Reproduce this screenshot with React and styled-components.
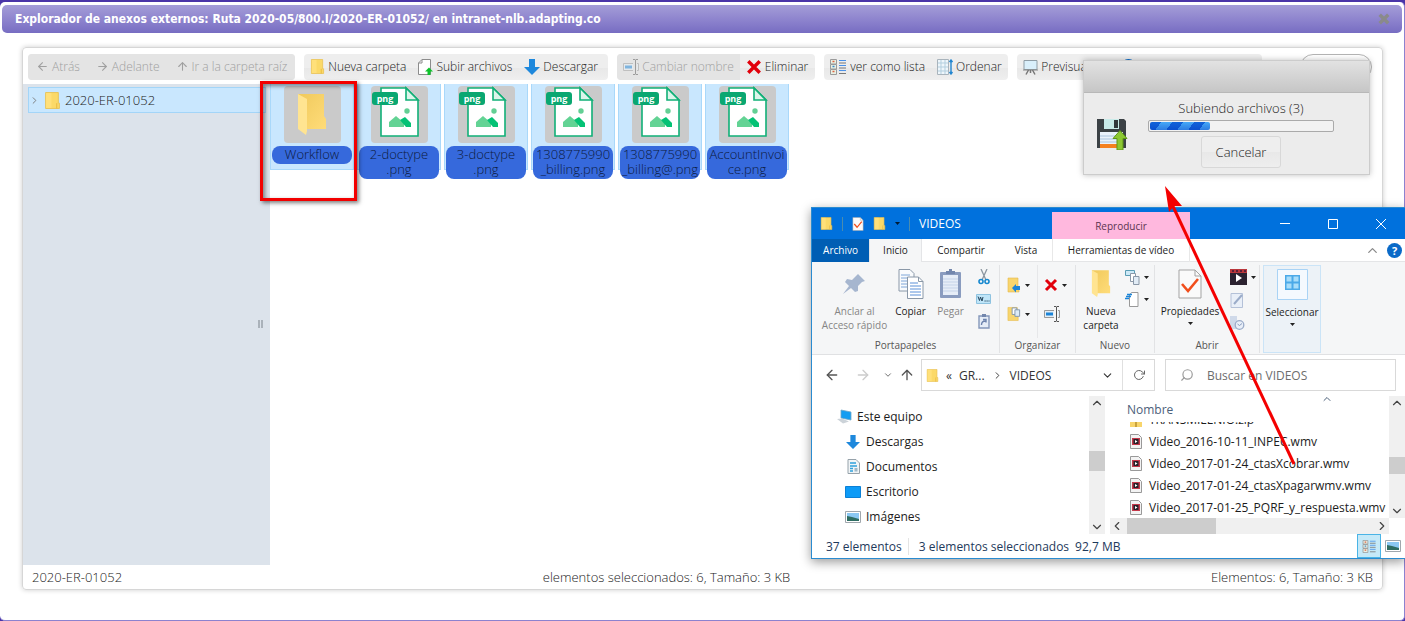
import React from "react";
import styled, { createGlobalStyle, css } from "styled-components";
import {
  FiArrowLeft,
  FiArrowRight,
  FiArrowUp,
  FiChevronDown,
  FiChevronRight,
  FiChevronUp,
  FiChevronLeft,
  FiRotateCw,
  FiSearch,
} from "react-icons/fi";

const GlobalStyle = createGlobalStyle`
  * {
    box-sizing: border-box;
  }

  body {
    margin: 0;
    background: #fff;
    font-family: "Open Sans", "Liberation Sans", sans-serif;
    overflow: hidden;
  }

  button, input {
    font: inherit;
    color: inherit;
    border: 0;
    padding: 0;
    background: none;
  }

  ul {
    list-style: none;
    margin: 0;
    padding: 0;
  }

  svg {
    display: block;
    flex: none;
  }
`;

/* ---------- Page and dialog ---------- */

const Page = styled.div`
  position: relative;
  display: flex;
  flex-direction: column;
  min-height: 100vh;
  background: #4a35a8;
  padding-top: 2px;
`;

const Dialog = styled.section`
  flex: 1;
  display: flex;
  flex-direction: column;
  background: #fff;
  border: 1px solid #8c82cf;
  border-width: 0 1px 1px 0;
  border-radius: 5px;
  padding: 3px 1px 0 2px;
`;

const DialogHeader = styled.header`
  display: flex;
  align-items: center;
  justify-content: space-between;
  height: 28px;
  padding: 0 12px 0 13px;
  margin-right: 1px;
  border-radius: 5px;
  background: linear-gradient(#a49dd8, #8a80cc 60%, #776dc2);
`;

const DialogTitle = styled.h1`
  margin: 0;
  color: #fff;
  font: bold 12px "DejaVu Sans Condensed", "DejaVu Sans", sans-serif;
`;

const CloseButton = styled.button`
  display: flex;
`;

const Manager = styled.main`
  flex: 1;
  display: flex;
  flex-direction: column;
  margin: 14px 20px 30px;
  border: 1px solid #d6d6d6;
  border-radius: 4px;
  box-shadow: 0 0 5px rgba(0, 0, 0, 0.2);
  font-size: 13px;
  font-weight: 300;
  color: #222;
`;

/* ---------- Toolbar ---------- */

const Toolbar = styled.nav`
  display: flex;
  height: 36px;
  gap: 9px;
  padding: 6px 10px 4px 5px;
  font-size: 12px;
`;

const ToolGroup = styled.div`
  display: flex;
  height: 26px;
  overflow: hidden;
  border-radius: 4px;
  background: linear-gradient(#eee 55%, #e8e8e8 55%, #efefef);
  min-width: ${(p) => p.$min}px;
`;

const ToolButton = styled.button`
  display: flex;
  align-items: center;
  gap: 3px;
  padding: 0 ${(p) => (p.$wide ? 8 : 6)}px 1px;
  white-space: nowrap;

  &:disabled {
    color: #a0a0a0;
    background: #e4e4e4;
  }
`;

const SearchBox = styled.input`
  width: 72px;
  height: 26px;
  margin-left: auto;
  border: 1px solid #b4b4b4;
  border-radius: 13px;
`;

/* ---------- Folder tree and files ---------- */

const Workspace = styled.div`
  flex: 1;
  display: flex;
`;

const Tree = styled.aside`
  position: relative;
  width: 247px;
  padding: 3px 4px 0 5px;
  background: #dce3eb;
`;

const TreeItem = styled.button`
  display: flex;
  align-items: center;
  width: 100%;
  height: 26px;
  border: 1px solid #a3d5f8;
  background: #c9e7fe;
  gap: 4px;
`;

const Grip = styled.div`
  position: absolute;
  right: 7px;
  top: 49%;
  width: 5px;
  height: 8px;
  border: 1px solid #aab2ba;
  border-width: 0 2px;
`;

const Files = styled.ul`
  flex: 1;
  display: flex;
  gap: 3px;
`;

const File = styled.li`
  display: flex;
  flex-direction: column;
  align-items: center;
  gap: 3px;
  width: 84px;
  height: 86px;
  padding-top: 2px;
  border: 1px solid #a9d8fa;
  border-top-width: 0;
  background: #c9e7fe;
`;

const Thumb = styled.div`
  width: 57px;
  height: 57px;
  display: flex;
  align-items: center;
  justify-content: center;
  border-radius: 4px;
  background: #cacaca;
`;

const FileName = styled.span`
  width: 80px;
  padding: 1px 0 2px;
  border-radius: 8px;
  background: #3669dc;
  color: #0c1a3c;
  line-height: 15px;
  text-align: center;
  white-space: pre;
`;

const StatusBar = styled.footer`
  display: flex;
  align-items: center;
  justify-content: space-between;
  height: 24px;
  padding: 0 9px;
`;

const Highlight = styled.div`
  position: absolute;
  left: 260px;
  top: 81px;
  width: 97px;
  height: 120px;
  border: 3px solid #f20000;
  box-shadow: 2px 2px 4px rgba(0, 0, 0, 0.5), inset 2px 2px 4px rgba(0, 0, 0, 0.45);
`;

/* ---------- Upload notice ---------- */

const Upload = styled.section`
  position: absolute;
  right: 35px;
  top: 60px;
  width: 287px;
  border: 1px solid #ccc;
  background: #ececec;
  box-shadow: 0 0 6px rgba(0, 0, 0, 0.25);
  font-size: 13px;
  font-weight: 300;
  color: #222;
`;

const UploadHeader = styled.div`
  height: 32px;
  border-bottom: 1px solid #b8b8b8;
  background: linear-gradient(#e2e2e2, #c6c6c6);
`;

const UploadBody = styled.div`
  display: flex;
  gap: 20px;
  padding: 6px 35px 6px 12px;
  align-items: center;
`;

const UploadInfo = styled.div`
  flex: 1;
  display: flex;
  flex-direction: column;
  align-items: center;
`;

const UploadText = styled.span`
  line-height: 18px;
`;

const Progress = styled.div`
  width: 100%;
  height: 12px;
  margin: 3px 0 4px;
  border: 1px solid #aaa;
  border-radius: 2px;
  padding: 1px;
  background: #f2f2f2;
`;

const ProgressBar = styled.div`
  height: 8px;
  border-radius: 2px;
  background: linear-gradient(rgba(0, 60, 190, 0), rgba(0, 40, 180, 0.35)),
    repeating-linear-gradient(125deg, #1063da 0 9px, #45a8f8 9px 18px);
`;

const CancelButton = styled.button`
  height: 32px;
  padding: 0 14px;
  border: 1px solid #d8d8d8;
  border-radius: 3px;
  background: linear-gradient(#eee 50%, #e8e8e8 50%, #eee);
`;

/* ---------- Windows explorer ---------- */

const Explorer = styled.section`
  position: absolute;
  right: 0;
  top: 207px;
  width: 594px;
  border: 1px solid #2a8bd0;
  border-right: 0;
  background: #fff;
  box-shadow: 0 3px 10px rgba(0, 0, 0, 0.4);
  font-size: 12px;
  color: #1c1c1c;
`;

const TitleBar = styled.header`
  display: flex;
  height: 31px;
  background: #0071dd;
  color: #fff;
`;

const QuickAccess = styled.div`
  display: flex;
  align-items: center;
  gap: 9px;
  width: 240px;
  padding-left: 8px;
`;

const Bar = styled.i`
  width: 1px;
  height: 14px;
  background: #4a8cae;
`;

const ToolsTab = styled.div`
  width: 138px;
  margin-top: 4px;
  background: #ffb8de;
  color: #5b3550;
  font-size: 10px;
  line-height: 28px;
  text-align: center;
`;

const WindowButtons = styled.div`
  display: flex;
  margin-left: auto;
`;

const WindowButton = styled.button`
  display: flex;
  width: 48px;
  align-items: center;
  justify-content: center;
`;

const Tabs = styled.nav`
  display: flex;
  align-items: center;
  height: 23px;
  font-size: 10px;
  border-bottom: 1px solid #e4e5e7;
`;

const Tab = styled.button`
  width: ${(p) => p.$width}px;
  height: 23px;
  white-space: nowrap;
  ${(p) => p.$file && css`background: #005eb4; color: #fff;`}
  ${(p) => p.$active && css`background: #f5f6f7; border: 1px solid #e4e5e7; border-width: 0 1px;`}
  ${(p) => p.$tool && css`border: 1px solid #e8e8e8; border-width: 0 1px;`}
`;

const TabsEnd = styled.div`
  display: flex;
  align-items: center;
  gap: 7px;
  margin-left: auto;
  padding-right: 3px;
  color: #888;
`;

const Ribbon = styled.div`
  display: flex;
  height: 93px;
  padding-top: 3px;
  background: #f5f6f7;
  border-bottom: 1px solid #e0e1e3;
  font-size: 10px;
`;

const RibbonGroup = styled.div`
  display: flex;
  flex-direction: column;
  width: ${(p) => p.$width}px;
  height: 88px;
  border-right: 1px solid #e2e3e5;
`;

const RibbonItems = styled.div`
  flex: 1;
  display: flex;
  justify-content: center;
`;

const RibbonLabel = styled.span`
  line-height: 14px;
  height: 15px;
  text-align: center;
  color: #555;
`;

const BigButton = styled.button`
  display: flex;
  flex-direction: column;
  align-items: center;
  width: ${(p) => p.$width}px;
  padding-top: 4px;
  line-height: 14px;
  white-space: pre;

  svg {
    margin-bottom: 5px;
  }

  span + svg {
    margin: 4px 0 0;
  }

  &:disabled {
    color: #858585;
  }
`;

const SmallColumn = styled.div`
  display: flex;
  flex-direction: column;
  align-items: ${(p) => (p.$left ? "flex-start" : "center")};
  gap: ${(p) => p.$gap || 6}px;
  width: ${(p) => p.$width}px;
  padding-top: ${(p) => p.$top || 4}px;
  padding-left: ${(p) => (p.$left ? 6 : 0)}px;
  border-left: ${(p) => (p.$line ? "1px solid #e6e7e9" : "0")};
`;

const SmallButton = styled.button`
  display: flex;
  align-items: center;
  gap: 4px;
  height: 16px;
`;

const SelectButton = styled(BigButton)`
  margin-left: 3px;
  height: 88px;
  border: 1px solid #cbe4f7;
  background: #ecf2f7;
  padding-top: 3px;
`;

const AddressRow = styled.div`
  display: flex;
  align-items: center;
  height: 32px;
  margin: 4px 9px 5px 10px;
  color: #555;
`;

const NavButton = styled.button`
  display: flex;
  justify-content: center;
  width: ${(p) => p.$width}px;

  &:disabled {
    color: #ccc;
  }
`;

const AddressBox = styled.div`
  display: flex;
  align-items: center;
  width: 234px;
  height: 32px;
  padding-left: 4px;
  border: 1px solid #d9d9d9;
  color: #333;

  ${NavButton} {
    margin-left: auto;
  }
`;

const Crumb = styled.span`
  margin: 0 7px;
`;

const RefreshButton = styled.button`
  display: flex;
  align-items: center;
  justify-content: center;
  width: 32px;
  height: 30px;
  border-left: 1px solid #e0e0e0;
  color: #666;
`;

const SearchField = styled.label`
  flex: 1;
  display: flex;
  align-items: center;
  gap: 13px;
  height: 32px;
  margin-left: 10px;
  padding-left: 14px;
  border: 1px solid #d9d9d9;

  svg {
    color: #999;
    transform: scaleX(-1);
  }

  input {
    flex: 1;
    min-width: 0;
    outline: 0;
  }

  input::placeholder {
    color: #6d6d6d;
    opacity: 1;
  }
`;

const Panes = styled.div`
  display: flex;
  height: 138px;
`;

const Places = styled.ul`
  flex: 1;
  overflow: hidden;
  padding-top: 8px;
`;

const Place = styled.li`
  display: flex;
  align-items: center;
  gap: 5px;
  height: 25px;
  padding-left: ${(p) => (p.$root ? 24 : 33)}px;
`;

const PlaceIcon = styled.span`
  display: flex;
  justify-content: center;
  width: 16px;
`;

const ScrollTrack = styled.div`
  display: flex;
  flex-direction: ${(p) => (p.$across ? "row" : "column")};
  align-items: center;
  flex: none;
  background: #f0f0f0;
  color: #444;
  ${(p) => (p.$across ? css`height: 16px; margin-right: 16px;` : css`width: 16px;`)}
`;

const ScrollThumb = styled.div`
  background: #cdcdcd;
  ${(p) =>
    p.$across
      ? css`width: ${p.$size}px; height: 16px; margin: 0 auto 0 ${p.$offset}px;`
      : css`height: ${p.$size}px; width: 16px; margin: ${p.$offset}px 0 auto;`}
`;

const ListPane = styled.div`
  display: flex;
  flex-direction: column;
  width: 295px;
  margin-left: 5px;
`;

const ListArea = styled.div`
  flex: 1;
  min-width: 0;
  display: flex;
  flex-direction: column;
`;

const ColumnHeader = styled.div`
  display: flex;
  align-items: center;
  height: 26px;
  padding-left: 17px;
  color: #4c607a;

  svg {
    align-self: flex-start;
    margin: -3px 56px 0 auto;
  }
`;

const VideoList = styled.ul`
  flex: 1;
  display: flex;
  flex-direction: column;
  justify-content: flex-end;
  overflow: hidden;
`;

const VideoRow = styled.li`
  display: flex;
  align-items: center;
  flex: none;
  gap: 7px;
  height: 22px;
  padding-left: 20px;
  white-space: nowrap;
`;

const ScrollColumn = styled.div`
  display: flex;
  height: 122px;
`;

const WindowStatus = styled.footer`
  display: flex;
  align-items: center;
  height: 24px;
  padding-left: 14px;
  color: #1e395b;
  white-space: nowrap;
`;

const StatusPart = styled.span`
  padding-right: 6px;
  margin-right: ${(p) => (p.$bar ? 10 : 0)}px;
  border-right: ${(p) => (p.$bar ? "1px solid #e4e4e4" : "0")};
`;

const ViewButton = styled.button`
  display: flex;
  align-items: center;
  justify-content: center;
  width: 24px;
  height: 24px;
  ${(p) => p.$on && css`background: #c5e9f8; border: 1px solid #4ab4e6; margin-left: auto;`}
`;

const ArrowLayer = styled.svg`
  position: absolute;
  right: 105px;
  top: 184px;
`;

/* ---------- Icons ---------- */

const FolderIcon = ({ size = 16 }) => (
  <svg width={size} height={size} viewBox="0 0 16 16">
    <path d="M1.500.500h12v10h1v5h-13z" fill="#fbd968" stroke="#e9c04f" strokeWidth=".8" />
    <path d="M2 1h5v14H2z" fill="#ffe07a" />
    <path d="M12 10.500v5" stroke="#e3b43a" strokeWidth=".8" />
  </svg>
);

const OpenFolder = ({ width = 32, height = 46 }) => (
  <svg width={width} height={height} viewBox="0 0 32 46">
    <defs>
      <linearGradient id="fold" x1="0" x2="1" y1="0" y2="1">
        <stop offset="0" stopColor="#f0c95c" />
        <stop offset="1" stopColor="#ffdc79" />
      </linearGradient>
    </defs>
    <path d="M2 2h26v22l2 3v10H8z" fill="url(#fold)" />
    <path d="M2 2l9 5v32l-1 4-8-6z" fill="#ffe491" />
  </svg>
);

const PngIcon = () => (
  <svg width="57" height="57" viewBox="0 0 57 57">
    <path d="M10 2h25l12 12v36H10z" fill="#fff" stroke="#11b077" strokeWidth="1.6" />
    <path d="M35 2v12h12z" fill="#dcf5ea" stroke="#11b077" strokeWidth="1.6" />
    <rect x="1" y="6" width="26" height="13" rx="3" fill="#0aa771" />
    <circle cx="36" cy="25" r="2.7" fill="#63cf94" />
    <path d="M18 41v-5l7-6 8 7v4z" fill="#63d394" />
    <path d="M29 34l5-3 6 6v4h-5z" fill="#04c275" />
    <text x="14" y="15.500" textAnchor="middle" fontFamily="Open Sans, sans-serif" fontWeight="700" fontSize="9" fill="#fff">png</text>
  </svg>
);

const UploadFileIcon = () => (
  <svg width="15" height="16" viewBox="0 0 15 16">
    <path d="M4 .5h8.500v15h-12V4z" fill="#fff" stroke="#8c8c8c" />
    <path d="M4 .5V4H.5" fill="none" stroke="#8c8c8c" />
    <path d="M11 8.500l4 4h-2.500V16h-3v-3.500H7z" fill="#0cc22a" />
  </svg>
);

const DownIcon = ({ size = 16 }) => (
  <svg width={size} height={size} viewBox="0 0 16 16">
    <path d="M5 0h6v8h5l-8 8-8-8h5z" fill="#1e88dc" />
  </svg>
);

const RenameIcon = ({ faded }) => (
  <svg width="16" height="16" viewBox="0 0 16 16" opacity={faded ? 0.5 : 1}>
    <path d="M10 4.500H.5v7H10M14 4.500h1.500v7H14" fill="#e3eef6" stroke="#999" />
    <path d="M2 6.500h7v3H2z" fill="#1b84d8" />
    <path d="M10 .5h2l.5.500.5-.5h2M10 15.500h2l.5-.5.5.500h2M12.500 1v14" fill="none" stroke="#555" />
  </svg>
);

const CrossIcon = ({ size = 14, color = "#e2000b", weight = 3 }) => (
  <svg width={size} height={size} viewBox="0 0 14 14">
    <path d="M2 2l10 10M12 2L2 12" stroke={color} strokeWidth={weight} fill="none" />
  </svg>
);

const ListIcon = ({ small }) => (
  <svg width="17" height={small ? 13 : 16} viewBox="0 0 17 16">
    <path d="M.5.500h6v4.500h-6zM.5 5.500h6v4.500h-6zM.5 10.500h6v5h-6z" fill="#e8f0e4" stroke="#9a9a9a" />
    <path d="M2.500 2.500h2M2.500 12.500h2" stroke="#e06340" strokeWidth="1.5" />
    <path d="M2.500 7.500h2" stroke="#3a88c8" strokeWidth="1.500" />
    <path d="M9 1.500h7M9 6.500h7M9 11.500h7" stroke="#4a91e8" />
    <path d="M9 4h7M9 9h7M9 14.500h7" stroke="#777" />
  </svg>
);

const SortIcon = () => (
  <svg width="16" height="16" viewBox="0 0 16 16">
    <path d="M.5.500h11v15H.5z" fill="#eef6fb" stroke="#a9b4bc" />
    <path d="M4 1v14M8 1v14M1 4h10M1 8h10M1 12h10" stroke="#b3cfdf" />
    <path d="M14 1v14M12.500 3L14 1l1.500 2M12.500 13L14 15l1.500-2" stroke="#2286d0" strokeWidth="1.400" fill="none" />
  </svg>
);

const ScreenIcon = () => (
  <svg width="15" height="16" viewBox="0 0 15 16">
    <path d="M1 1.500h13v9H1z" fill="#d9effb" stroke="#8f9da6" />
    <path d="M0 11h15" stroke="#888" />
    <path d="M5.500 11L3 15.500M9.500 11l2.500 4.500M7.500 11v3" stroke="#777" strokeWidth="1.500" />
  </svg>
);

const SaveIcon = () => (
  <svg width="32" height="32" viewBox="0 0 32 32">
    <path d="M1 1h27l2 2v27H1z" fill="#3b4145" />
    <path d="M8 1h15v10H8z" fill="#c9ebe9" />
    <path d="M18 2h4v8h-4z" fill="#33393c" />
    <path d="M4 14h23v16H4z" fill="#e9f2fb" />
    <path d="M4 18h20M4 21h20M4 24h20" stroke="#aac4de" />
    <path d="M4 26h23v4H4z" fill="#f48120" />
    <path d="M24 12.500l7 8h-4V32h-6V20.500h-4z" fill="#8cc832" stroke="#5e9716" />
  </svg>
);

const CheckedDoc = ({ width = 12, height = 14 }) => (
  <svg width={width} height={height} viewBox="0 0 24 30">
    <path d="M1 1h16l6 6v22H1z" fill="#fafafa" stroke="#a3a3a3" />
    <path d="M17 1v6h6" fill="none" stroke="#a3a3a3" />
    <path d="M4 15l6 7L20 10" fill="none" stroke="#f14e1c" strokeWidth="2.600" />
  </svg>
);

const Caret = ({ color = "#222" }) => (
  <svg width="5" height="3" viewBox="0 0 5 3">
    <path d="M0 0h5L2.500 3z" fill={color} />
  </svg>
);

const PinIcon = () => (
  <svg width="30" height="30" viewBox="0 0 30 30">
    <path d="M18 5l7 7-3 1-4 4 0 5-3 1-4-4-8 6 6-8-4-4 2-3 5 1 4-4z" fill="#a6b6cf" />
  </svg>
);

const CopyIcon = () => (
  <svg width="26" height="30" viewBox="0 0 26 30">
    <path d="M1 .5h11l4 4V22H1z" fill="#f9fbfd" stroke="#8a98a8" />
    <path d="M3 6h9M3 9h11M3 12h11M3 15h11M3 18h11" stroke="#7fa6d8" />
    <path d="M9.500 8h11l4.500 4.500V29.500H9.500z" fill="#fff" stroke="#8a98a8" />
    <path d="M20.500 8v4.500H25" fill="none" stroke="#8a98a8" />
    <path d="M12 14h8M12 17h11M12 20h11M12 23h11M12 26h11" stroke="#5a90d8" />
  </svg>
);

const PasteIcon = () => (
  <svg width="24" height="30" viewBox="0 0 24 30">
    <rect x="1" y="3" width="21" height="26" rx="1" fill="#8a9cbf" />
    <path d="M4 6h15v20H4z" fill="#e6edf7" />
    <path d="M7 5V2h3V0h3v2h3v3z" fill="#7387ad" />
    <path d="M4 10h15M4 13h15M4 16h15M4 19h15M4 22h15" stroke="#c5d3e8" />
  </svg>
);

const ScissorsIcon = () => (
  <svg width="12" height="16" viewBox="0 0 12 16">
    <path d="M3 0l5 11M9 0L4 11" stroke="#8b96a0" strokeWidth="1.300" />
    <circle cx="3" cy="12.500" r="2" fill="none" stroke="#1688cf" strokeWidth="1.600" />
    <circle cx="9" cy="12.500" r="2" fill="none" stroke="#1688cf" strokeWidth="1.600" />
  </svg>
);

const PathIcon = () => (
  <svg width="15" height="10" viewBox="0 0 15 10">
    <path d="M.5.500h14v9H.5z" fill="#bfe5f8" stroke="#8ec3e0" />
    <path d="M2 2.500l1.500 4 1-3.500 1.500 4 1-4M8.500 7h1.200M10.500 7h1.200M12.500 7h1" stroke="#25455c" fill="none" />
  </svg>
);

const ShortcutIcon = () => (
  <svg width="12" height="15" viewBox="0 0 12 15">
    <path d="M1 2h10v12H1z" fill="#e6edf7" stroke="#8497ba" strokeWidth="1.400" />
    <path d="M4 0h4v3H4z" fill="#7387ad" />
    <path d="M3.500 11c0-3 1-4 4-4M5 5.500h3v3" stroke="#6d83ad" strokeWidth="1.400" fill="none" />
  </svg>
);

const MoveIcon = () => (
  <svg width="14" height="16" viewBox="0 0 14 16">
    <path d="M1 1h10v10h1v4H1z" fill="#f7d56e" stroke="#e6bb4c" strokeWidth=".6" />
    <path d="M13 9v4H9v2.500L5 11l4-4v2z" fill="#1b84d8" />
  </svg>
);

const CopyToIcon = () => (
  <svg width="14" height="16" viewBox="0 0 15 16">
    <path d="M1 1h10v10h1v4H1z" fill="#f7d56e" stroke="#e6bb4c" strokeWidth=".6" />
    <path d="M5.500 1.500h5v7h-5z" fill="#fff" stroke="#8095aa" />
    <path d="M8.500 3.500h5v7h-5z" fill="#dcebf8" stroke="#8095aa" />
  </svg>
);

const NewItemIcon = () => (
  <svg width="15" height="15" viewBox="0 0 15 15">
    <path d="M.5.500h9v5h-9z" fill="#cde9f7" stroke="#5a9cb4" />
    <path d="M5.500 3.500h5v8h-5z" fill="#fff" stroke="#8a98a8" />
    <path d="M8.500 6.500h5.500v8H8.500z" fill="#e1ecf6" stroke="#8a98a8" />
  </svg>
);

const EasyAccessIcon = () => (
  <svg width="15" height="15" viewBox="0 0 15 15">
    <path d="M4.500 3l2-2.500H13v14H4.500z" fill="#fff" stroke="#999" />
    <path d="M2 2.500h5M1 4.500h5M0 6.500h4" stroke="#1b84d8" strokeWidth="1.300" />
  </svg>
);

const VideoIcon = () => (
  <svg width="17" height="16" viewBox="0 0 17 16">
    <path d="M0 0h17v16H0z" fill="#2b2230" />
    <path d="M0 0h17v4H0z" fill="#b9373c" />
    <path d="M2 1h2v2H2zM6 1h2v2H6zM10 1h2v2h-2zM14 1h2v2h-2z" fill="#5a2038" />
    <path d="M6 5l6 4-6 4z" fill="#fff" />
  </svg>
);

const EditIcon = () => (
  <svg width="14" height="15" viewBox="0 0 14 15">
    <path d="M1 .5h11.500v14H1z" fill="#e9eff8" stroke="#b4c1d8" />
    <path d="M4 11l8-9" stroke="#9bacc9" strokeWidth="2" />
  </svg>
);

const HistoryIcon = () => (
  <svg width="15" height="14" viewBox="0 0 15 14">
    <path d="M0 0h7v13H0z" fill="#cfd9e9" />
    <circle cx="9.500" cy="9" r="4.300" fill="#e9eff8" stroke="#9bacc9" strokeWidth="1.300" />
    <path d="M7.500 8l2 1.500 2.500-2" stroke="#8a9dbe" fill="none" />
  </svg>
);

const SelectIcon = () => (
  <svg width="31" height="31" viewBox="0 0 31 31">
    <path d="M.5.500h30v30H.5z" fill="#f4f9fe" stroke="#a9d3f5" />
    <path d="M8 6h15v15H8z" fill="#4ba9e8" />
    <path d="M9.500 7.500h5v5h-5zM16.500 7.500h5v5h-5zM9.500 14.500h5v5h-5zM16.500 14.500h5v5h-5z" fill="#a8ddfa" />
  </svg>
);

const PcIcon = () => (
  <svg width="16" height="15" viewBox="0 0 16 15">
    <path d="M5 1l10 2v8L5 9z" fill="#139df2" stroke="#6fa6c6" strokeWidth=".8" />
    <path d="M1 10l5-.5 7 3-6 2z" fill="#ccd3d9" />
  </svg>
);

const DocumentsIcon = () => (
  <svg width="13" height="15" viewBox="0 0 13 15">
    <path d="M1 .5h8L12.500 4v10.500H1z" fill="#f0f4f6" stroke="#96a2aa" />
    <path d="M3 4h6M3 7h7M3 9.500h3M3 12h3" stroke="#2fa0dc" strokeWidth="1.300" />
    <path d="M7.500 9h3v3.500h-3z" fill="#9fb9c8" />
  </svg>
);

const DesktopIcon = () => (
  <svg width="16" height="12" viewBox="0 0 16 12">
    <path d="M.5.500h15v11H.5z" fill="#0d9bf7" stroke="#0b80d6" />
  </svg>
);

const PictureIcon = () => (
  <svg width="16" height="12" viewBox="0 0 16 12">
    <path d="M.5.500h15v11H.5z" fill="#fff" stroke="#a0a7ad" />
    <path d="M2 2h12v8H2z" fill="#8bc8f3" />
    <path d="M2 5l5 1 7 2v2H2z" fill="#2e6d62" />
  </svg>
);

const MusicIcon = () => (
  <svg width="16" height="20" viewBox="0 0 16 20">
    <path d="M6.500 0h3v16h-3z" fill="#1e9be8" />
    <circle cx="6" cy="16" r="3" fill="#1e9be8" />
  </svg>
);

const WmvIcon = () => (
  <svg width="12" height="15" viewBox="0 0 12 15">
    <path d="M.5.500h8l3 3v11H.5z" fill="#f3f3f3" stroke="#999" />
    <path d="M2 4h8v7H2z" fill="#c4394b" />
    <path d="M3.500 5h5v5h-5z" fill="#252028" />
    <path d="M5 6l2.500 1.500L5 9z" fill="#fff" />
  </svg>
);

const ZipIcon = () => (
  <svg width="12" height="16" viewBox="0 0 12 16">
    <path d="M0 0h12v16H0z" fill="#f8d56b" />
    <path d="M5 0h2v16H5z" fill="#c9a23c" />
  </svg>
);

const HelpIcon = () => (
  <svg width="15" height="15" viewBox="0 0 15 15">
    <circle cx="7.500" cy="7.500" r="7.500" fill="#0a6ac8" />
    <text x="7.500" y="11.500" textAnchor="middle" fontFamily="Open Sans, sans-serif" fontWeight="700" fontSize="11" fill="#fff">?</text>
  </svg>
);

/* ---------- Data ---------- */

const files = [
  "2-doctype\n.png",
  "3-doctype\n.png",
  "1308775990\n_billing.png",
  "1308775990\n_billing@.png",
  "AccountInvoi\nce.png",
];

const places = [
  { name: "Descargas", icon: <DownIcon size={14} /> },
  { name: "Documentos", icon: <DocumentsIcon /> },
  { name: "Escritorio", icon: <DesktopIcon /> },
  { name: "Imágenes", icon: <PictureIcon /> },
];

const videos = [
  "Video_2016-10-11_INPEC.wmv",
  "Video_2017-01-24_ctasXcobrar.wmv",
  "Video_2017-01-24_ctasXpagarwmv.wmv",
  "Video_2017-01-25_PQRF_y_respuesta.wmv",
];

const progress = 33;

/* ---------- Components ---------- */

function FileToolbar() {
  return (
    <Toolbar>
      <ToolGroup $min={267}>
        <ToolButton $wide disabled><FiArrowLeft size={13} />Atrás</ToolButton>
        <ToolButton $wide disabled><FiArrowRight size={13} />Adelante</ToolButton>
        <ToolButton $wide disabled><FiArrowUp size={13} />Ir a la carpeta raíz</ToolButton>
      </ToolGroup>
      <ToolGroup $min={304}>
        <ToolButton><FolderIcon size={15} />Nueva carpeta</ToolButton>
        <ToolButton><UploadFileIcon />Subir archivos</ToolButton>
        <ToolButton><DownIcon />Descargar</ToolButton>
      </ToolGroup>
      <ToolGroup $min={198}>
        <ToolButton disabled><RenameIcon faded />Cambiar nombre</ToolButton>
        <ToolButton><CrossIcon size={16} />Eliminar</ToolButton>
      </ToolGroup>
      <ToolGroup $min={184}>
        <ToolButton><ListIcon />ver como lista</ToolButton>
        <ToolButton><SortIcon />Ordenar</ToolButton>
      </ToolGroup>
      <ToolGroup $min={245}>
        <ToolButton><ScreenIcon />Previsualizar</ToolButton>
        <ToolButton aria-label="Ayuda"><HelpIcon /></ToolButton>
      </ToolGroup>
      <SearchBox type="search" aria-label="Buscar" />
    </Toolbar>
  );
}

function UploadNotice() {
  return (
    <Upload>
      <UploadHeader />
      <UploadBody>
        <SaveIcon />
        <UploadInfo>
          <UploadText>Subiendo archivos (3)</UploadText>
          <Progress role="progressbar" aria-valuenow={progress}>
            <ProgressBar style={{ width: `${progress}%` }} />
          </Progress>
          <CancelButton>Cancelar</CancelButton>
        </UploadInfo>
      </UploadBody>
    </Upload>
  );
}

function ExplorerRibbon() {
  return (
    <Ribbon>
      <RibbonGroup $width={188}>
        <RibbonItems>
          <BigButton $width={76} disabled><PinIcon />{"Anclar al\nAcceso rápido"}</BigButton>
          <BigButton $width={36}><CopyIcon />Copiar</BigButton>
          <BigButton $width={44} disabled><PasteIcon />Pegar</BigButton>
          <SmallColumn $width={22}>
            <SmallButton aria-label="Cortar"><ScissorsIcon /></SmallButton>
            <SmallButton aria-label="Copiar ruta"><PathIcon /></SmallButton>
            <SmallButton aria-label="Pegar acceso directo"><ShortcutIcon /></SmallButton>
          </SmallColumn>
        </RibbonItems>
        <RibbonLabel>Portapapeles</RibbonLabel>
      </RibbonGroup>
      <RibbonGroup $width={76}>
        <RibbonItems>
          <SmallColumn $width={36} $top={12} $gap={13}>
            <SmallButton aria-label="Mover a"><MoveIcon /><Caret /></SmallButton>
            <SmallButton aria-label="Copiar a"><CopyToIcon /><Caret /></SmallButton>
          </SmallColumn>
          <SmallColumn $width={38} $top={12} $gap={13} $left $line>
            <SmallButton aria-label="Eliminar"><CrossIcon /><Caret /></SmallButton>
            <SmallButton aria-label="Cambiar nombre"><RenameIcon /></SmallButton>
          </SmallColumn>
        </RibbonItems>
        <RibbonLabel>Organizar</RibbonLabel>
      </RibbonGroup>
      <RibbonGroup $width={79}>
        <RibbonItems>
          <BigButton $width={44}><OpenFolder width={22} height={30} />{"Nueva\ncarpeta"}</BigButton>
          <SmallColumn $width={28}>
            <SmallButton aria-label="Nuevo elemento"><NewItemIcon /><Caret /></SmallButton>
            <SmallButton aria-label="Fácil acceso"><EasyAccessIcon /><Caret /></SmallButton>
          </SmallColumn>
        </RibbonItems>
        <RibbonLabel>Nuevo</RibbonLabel>
      </RibbonGroup>
      <RibbonGroup $width={105}>
        <RibbonItems>
          <BigButton $width={68}>
            <CheckedDoc width={24} height={30} />
            <span>Propiedades</span>
            <Caret />
          </BigButton>
          <SmallColumn $width={34} $gap={7} $left>
            <SmallButton aria-label="Abrir"><VideoIcon /><Caret /></SmallButton>
            <SmallButton aria-label="Modificar"><EditIcon /></SmallButton>
            <SmallButton aria-label="Historial"><HistoryIcon /></SmallButton>
          </SmallColumn>
        </RibbonItems>
        <RibbonLabel>Abrir</RibbonLabel>
      </RibbonGroup>
      <SelectButton $width={58}>
        <SelectIcon />
        <span>Seleccionar</span>
        <Caret />
      </SelectButton>
    </Ribbon>
  );
}

function ExplorerWindow() {
  return (
    <Explorer>
      <TitleBar>
        <QuickAccess>
          <FolderIcon size={13} />
          <Bar />
          <CheckedDoc />
          <FolderIcon size={13} />
          <Caret color="#001a33" />
          <Bar />
          VIDEOS
        </QuickAccess>
        <ToolsTab>Reproducir</ToolsTab>
        <WindowButtons>
          <WindowButton aria-label="Minimizar">
            <svg width="10" height="10"><path d="M0 4.500h10" stroke="#fff" /></svg>
          </WindowButton>
          <WindowButton aria-label="Maximizar">
            <svg width="10" height="10"><path d="M.5.500h9v9h-9z" fill="none" stroke="#fff" /></svg>
          </WindowButton>
          <WindowButton aria-label="Cerrar">
            <svg width="10" height="10"><path d="M0 0l10 10M10 0L0 10" stroke="#fff" /></svg>
          </WindowButton>
        </WindowButtons>
      </TitleBar>
      <Tabs>
        <Tab $width={57} $file>Archivo</Tab>
        <Tab $width={53} $active>Inicio</Tab>
        <Tab $width={78}>Compartir</Tab>
        <Tab $width={52}>Vista</Tab>
        <Tab $width={138} $tool>Herramientas de vídeo</Tab>
        <TabsEnd>
          <FiChevronUp size={15} />
          <HelpIcon />
        </TabsEnd>
      </Tabs>
      <ExplorerRibbon />
      <AddressRow>
        <NavButton $width={20} aria-label="Atrás"><FiArrowLeft size={16} /></NavButton>
        <NavButton $width={41} disabled aria-label="Adelante"><FiArrowRight size={16} /></NavButton>
        <NavButton $width={10} aria-label="Recientes"><FiChevronDown size={10} /></NavButton>
        <NavButton $width={28} aria-label="Subir"><FiArrowUp size={16} /></NavButton>
        <AddressBox>
          <FolderIcon size={13} />
          <Crumb>«</Crumb>
          <span>GR...</span>
          <Crumb><FiChevronRight size={11} /></Crumb>
          <span>VIDEOS</span>
          <NavButton $width={30} aria-label="Historial"><FiChevronDown size={13} /></NavButton>
          <RefreshButton aria-label="Actualizar"><FiRotateCw size={12} /></RefreshButton>
        </AddressBox>
        <SearchField>
          <FiSearch size={14} />
          <input placeholder="Buscar en VIDEOS" aria-label="Buscar en VIDEOS" />
        </SearchField>
      </AddressRow>
      <Panes>
        <Places>
          <Place $root><PlaceIcon><PcIcon /></PlaceIcon>Este equipo</Place>
          {places.map((place) => (
            <Place key={place.name}><PlaceIcon>{place.icon}</PlaceIcon>{place.name}</Place>
          ))}
        </Places>
        <ScrollTrack>
          <FiChevronUp size={14} />
          <ScrollThumb $size={20} $offset={41} />
          <FiChevronDown size={14} />
        </ScrollTrack>
        <ListPane>
          <ScrollColumn>
            <ListArea>
              <ColumnHeader>Nombre<FiChevronUp size={12} /></ColumnHeader>
              <VideoList>
                <VideoRow><ZipIcon />TRANSMILENIO.zip</VideoRow>
                {videos.map((video) => (
                  <VideoRow key={video}><WmvIcon />{video}</VideoRow>
                ))}
              </VideoList>
            </ListArea>
            <ScrollTrack>
              <FiChevronUp size={14} />
              <ScrollThumb $size={17} $offset={47} />
              <FiChevronDown size={14} />
            </ScrollTrack>
          </ScrollColumn>
          <ScrollTrack $across>
            <FiChevronLeft size={14} />
            <ScrollThumb $across $size={89} $offset={3} />
            <FiChevronRight size={14} />
          </ScrollTrack>
        </ListPane>
      </Panes>
      <WindowStatus>
        <StatusPart $bar>37 elementos</StatusPart>
        <StatusPart>3 elementos seleccionados</StatusPart>
        <StatusPart>92,7 MB</StatusPart>
        <ViewButton $on aria-label="Detalles"><ListIcon small /></ViewButton>
        <ViewButton aria-label="Iconos grandes"><PictureIcon /></ViewButton>
      </WindowStatus>
    </Explorer>
  );
}

export default function App() {
  return (
    <>
      <GlobalStyle />
      <Page>
        <Dialog>
          <DialogHeader>
            <DialogTitle>
              Explorador de anexos externos: Ruta 2020-05/800.I/2020-ER-01052/ en intranet-nlb.adapting.co
            </DialogTitle>
            <CloseButton aria-label="Cerrar">
              <CrossIcon size={12} color="#8a8a8a" weight={4} />
            </CloseButton>
          </DialogHeader>
          <Manager>
            <FileToolbar />
            <Workspace>
              <Tree>
                <TreeItem>
                  <FiChevronRight size={11} color="#777" />
                  <FolderIcon size={17} />
                  <span>2020-ER-01052</span>
                </TreeItem>
                <Grip />
              </Tree>
              <Files>
                <File>
                  <Thumb><OpenFolder /></Thumb>
                  <FileName>Workflow</FileName>
                </File>
                {files.map((name) => (
                  <File key={name}>
                    <Thumb><PngIcon /></Thumb>
                    <FileName>{name}</FileName>
                  </File>
                ))}
              </Files>
            </Workspace>
            <StatusBar>
              <span>2020-ER-01052</span>
              <span>elementos seleccionados: 6, Tamaño: 3 KB</span>
              <span>Elementos: 6, Tamaño: 3 KB</span>
            </StatusBar>
          </Manager>
        </Dialog>
        <Highlight />
        <UploadNotice />
        <ExplorerWindow />
        <ArrowLayer width="140" height="284" viewBox="0 0 140 284">
          <path d="M134 280L10 16" stroke="#f40000" strokeWidth="3" />
          <path d="M5 2l17 20-8 0-5 6z" fill="#f40000" />
        </ArrowLayer>
      </Page>
    </>
  );
}
